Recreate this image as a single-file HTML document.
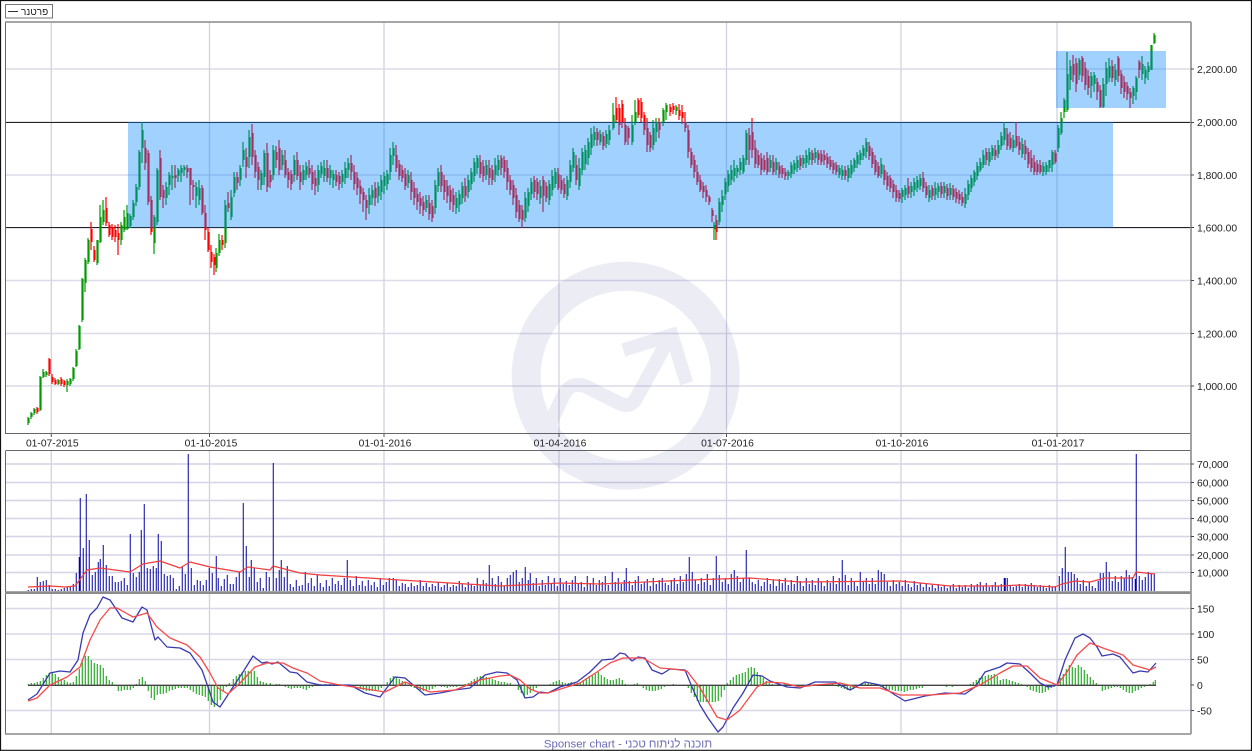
<!DOCTYPE html>
<html lang="he">
<head>
<meta charset="utf-8">
<title>Sponser chart</title>
<style>
html,body{margin:0;padding:0;background:#fff;width:1252px;height:751px;overflow:hidden}
svg{display:block;position:absolute;left:0;top:0}
text{font-family:"Liberation Sans",Arial,sans-serif;font-size:10.3px;fill:#222}
.c path{stroke:#009900;stroke-width:1.2;fill:none}
.c path.r{stroke:#ff0000}
</style>
</head>
<body>
<svg xmlns="http://www.w3.org/2000/svg" width="1252" height="751" viewBox="0 0 1252 751">
<rect x="0" y="0" width="1252" height="751" fill="#fff"/>
<g fill="none" stroke="#dcdce9" stroke-width="1.5">
<path d="M5 69H1191M5 122H1191M5 175H1191M5 228H1191M5 280.5H1191M5 333.5H1191M5 386H1191"/>
<path stroke="#d4d4e6" d="M5 464H1191M5 482.5H1191M5 500.5H1191M5 518.5H1191M5 536.5H1191M5 555H1191M5 572.5H1191"/>
<path stroke="#d8d8e8" d="M5 608.5H1191M5 634H1191M5 659.5H1191M5 710.5H1191"/>
<path stroke="#d2d2e2" stroke-width="1.3" d="M51.3 22V434M209.5 22V434M384 22V434M559 22V434M726.5 22V434M901 22V434M1057 22V434M51.3 451V591M209.5 451V591M384 451V591M559 451V591M726.5 451V591M901 451V591M1057 451V591M51.3 593V734M209.5 593V734M384 593V734M559 593V734M726.5 593V734M901 593V734M1057 593V734"/>
</g>
<path d="M5 122.5H1191M5 227.5H1191" stroke="#222" stroke-width="1.1" fill="none"/>
<g class="c">
<path d="M28 417V425M29 418V423M31 412V419M32 413V417M34 408V415M35 409V413"/>
<path class="r" d="M37 407V414M38 408V412"/>
<path d="M40 376V411M41 377V410M43 369V378M44 372V377M46 371V377M47 372V375"/>
<path class="r" d="M49 358V376M50 359V374M52 374V384M53 377V382M55 378V385M56 380V384"/>
<path d="M58 379V385M59 380V384"/>
<path class="r" d="M61 377V386M62 379V384M64 380V387M65 381V385"/>
<path d="M67 379V392M68 381V385M70 378V386M71 379V384M73 367V381M74 368V379M76 349V367M77 351V366M79 325V350M80 326V349M82 278V322M83 279V320M85 258V292M86 260V283M88 238V264M89 240V262"/>
<path class="r" d="M91 222V250M92 229V242M94 246V262M95 250V260"/>
<path d="M97 240V265M98 240V263M100 205V243M101 217V242M103 200V225M104 210V222"/>
<path class="r" d="M106 197V226M107 208V223M109 222V237M110 225V235M112 224V240M113 227V237M115 225V242M116 230V237M118 224V255M119 233V240"/>
<path d="M121 222V245M122 225V240M124 210V232M125 217V230M127 205V230M128 213V229M130 214V228M131 216V226M133 200V220M134 203V217M136 184V206M137 187V202M139 150V190M140 152V187M142 122V163M143 130V148"/>
<path class="r" d="M145 140V170M146 148V163M148 150V205M149 153V202M151 196V235M152 200V232"/>
<path d="M154 215V254M155 217V243M157 168V225M158 170V222"/>
<path class="r" d="M160 150V200M161 158V197M163 185V208M164 190V198"/>
<path d="M166 182V205M167 187V198M169 172V195M170 175V185M172 165V190M173 176V178"/>
<path class="r" d="M175 165V188M176 175V178"/>
<path d="M178 168V182M179 170V176M181 165V182M182 168V173M184 165V176M185 167V170"/>
<path class="r" d="M187 165V178M188 168V172M190 168V205M191 168V185M193 180V200M194 185V187"/>
<path d="M196 182V208M197 187V196M199 180V205M200 188V200"/>
<path class="r" d="M202 185V215M203 188V213M205 205V240M206 213V230M208 228V252M209 232V250M211 245V268M212 252V262M214 254V275M215 257V265"/>
<path d="M216 248V272M217 253V268M219 234V256M220 240V253"/>
<path class="r" d="M222 235V250M223 240V245"/>
<path d="M225 200V248M226 205V243"/>
<path class="r" d="M228 192V212M229 203V208"/>
<path d="M231 190V220M232 197V217M234 172V197M235 177V193"/>
<path class="r" d="M237 172V190M238 177V183"/>
<path d="M240 165V186M241 168V180M243 142V167M244 150V160"/>
<path class="r" d="M246 148V178M247 157V167"/>
<path d="M249 130V168M250 137V157"/>
<path class="r" d="M252 124V165M253 133V157M255 150V178M256 155V172M258 162V190M259 167V180"/>
<path d="M261 170V190M262 173V185M264 150V185M265 153V177"/>
<path class="r" d="M267 143V192M268 153V187M270 170V188M271 175V182"/>
<path d="M273 145V180M274 150V175"/>
<path class="r" d="M276 146V168M277 152V160M279 140V175M280 148V170"/>
<path d="M282 150V170M283 155V165"/>
<path class="r" d="M285 150V178M286 160V175M288 168V188M289 172V180M291 170V190M292 174V184"/>
<path d="M294 155V182M295 160V175"/>
<path class="r" d="M297 152V180M298 160V176M300 165V190M301 172V182"/>
<path d="M303 165V185M304 170V180M306 162V180M307 166V175"/>
<path class="r" d="M309 160V178M310 168V174M312 165V190M313 172V184M315 170V195M316 178V186"/>
<path d="M318 165V192M319 170V185M321 162V178M322 166V174M324 160V182M325 168V176"/>
<path class="r" d="M327 160V182M328 168V178"/>
<path d="M330 165V185M331 170V178M333 170V188M334 174V180"/>
<path class="r" d="M336 170V186M337 175V182M339 172V190M340 176V184"/>
<path d="M342 170V188M343 174V182M345 162V184M346 168V178M348 158V178M349 163V170"/>
<path class="r" d="M351 155V180M352 163V172M354 165V190M355 172V184M357 172V195M358 178V188M360 180V204M361 186V194M363 188V212M364 192V200M366 195V220M367 200V208"/>
<path d="M369 188V214M370 195V205M372 185V205M373 190V198"/>
<path class="r" d="M375 182V206M376 188V198"/>
<path d="M378 182V203M379 186V196M381 175V200M382 180V192M384 172V194M385 176V186M387 170V190M388 174V184M390 148V180M391 155V172M393 142V165M394 148V156"/>
<path class="r" d="M396 145V172M397 155V168M399 160V180M400 164V176M402 165V182M403 170V178M405 168V190M406 174V186"/>
<path d="M408 170V188M409 175V183"/>
<path class="r" d="M411 172V200M412 180V192M414 182V205M415 188V198M417 188V210M418 194V202M420 192V214M421 198V206M423 196V216M424 202V210"/>
<path d="M426 195V212M427 200V208"/>
<path class="r" d="M429 195V220M430 203V214M432 200V222M433 206V218"/>
<path d="M435 180V214M436 185V208M438 168V192M439 172V186"/>
<path class="r" d="M441 165V192M442 172V186M444 175V200M445 180V192M447 180V203M448 186V196M450 185V210M451 190V202M453 188V212M454 195V205"/>
<path d="M456 192V214M457 198V208M459 190V212M460 194V205M462 182V204M463 186V198"/>
<path class="r" d="M465 178V202M466 186V196"/>
<path d="M468 175V198M469 180V192M471 168V190M472 172V184M474 158V182M475 162V176M477 155V174M478 158V168"/>
<path class="r" d="M480 155V178M481 162V174M483 160V182M484 166V176"/>
<path d="M486 160V180M487 165V175"/>
<path class="r" d="M489 160V185M490 168V178M492 165V185M493 170V180"/>
<path d="M495 158V182M496 165V175M498 155V176M499 160V170"/>
<path class="r" d="M501 155V175M502 158V168M504 156V178M505 160V172M507 160V190M508 168V182M510 175V195M511 180V190M513 180V205M514 185V198M516 188V218M517 195V212M519 200V222M520 205V219"/>
<path class="r" d="M522 205V228M523 210V220"/>
<path d="M525 192V222M526 198V218M528 188V212M529 192V206M531 178V200M532 182V194"/>
<path class="r" d="M534 176V198M535 180V192M537 178V200M538 182V194"/>
<path d="M540 180V204M541 186V198"/>
<path class="r" d="M543 176V212M544 180V196M546 182V202M547 186V198"/>
<path d="M549 180V205M550 184V200M552 170V196M553 176V190M555 168V188M556 172V184"/>
<path class="r" d="M558 168V190M559 174V188M561 175V194M562 180V190M564 178V198M565 184V194"/>
<path d="M567 176V200M568 180V196M570 160V188M571 165V182M573 148V172M574 152V168"/>
<path class="r" d="M576 155V185M577 165V180"/>
<path d="M579 158V190M580 168V186M582 148V175M583 152V170M585 145V170M586 150V164M588 138V165M589 142V158M591 128V155M592 134V148M594 126V146M595 132V140"/>
<path class="r" d="M597 128V146M598 132V140"/>
<path d="M600 130V145M601 134V142"/>
<path class="r" d="M603 132V150M604 136V146"/>
<path d="M606 130V148M607 134V144M609 125V145M610 130V140"/>
<path d="M613 103V130M614 115V128"/>
<path class="r" d="M616 97V122M617 108V120M619 104V135M620 108V125M622 100V128M623 104V122M625 118V145M626 125V142M628 126V145M629 128V138"/>
<path d="M632 115V145M633 125V142M635 100V125M636 112V122"/>
<path class="r" d="M638 98V118M639 100V115M641 98V122M642 102V118M644 112V135M645 115V130M647 118V152M648 128V145M650 132V152M651 135V148"/>
<path d="M653 120V150M654 128V145M656 118V142M657 122V132"/>
<path class="r" d="M659 118V138M660 122V130"/>
<path d="M663 108V126M664 110V122M666 103V120M667 105V112"/>
<path class="r" d="M670 104V116M671 107V112M673 103V114M674 106V110"/>
<path d="M676 105V115M677 107V111"/>
<path class="r" d="M679 104V120M680 110V116M682 105V124M683 112V118M685 112V132M686 122V128M688 125V158M689 130V152M691 148V168M692 152V165M694 155V178M695 160V172M697 165V185M698 172V182M700 175V192M701 180V190M703 182V198M704 186V192M706 185V202M707 190V197M709 195V205M710 197V202M712 208V222M713 210V216"/>
<path d="M714 222V240M715 225V229"/>
<path class="r" d="M716 215V240M717 220V232"/>
<path d="M719 198V225M720 202V222M722 190V212M723 196V205M725 178V200M726 182V194M728 170V192M729 174V186M731 165V185M732 170V180M734 160V182M735 168V176M737 165V178M738 168V172M740 158V175M741 162V170M743 155V174M744 158V172M746 130V165M747 133V160"/>
<path class="r" d="M749 128V165M750 135V150M752 118V158M753 132V150M755 140V168M756 148V164M758 150V168M759 155V165M761 153V175M762 158V170M764 155V172M765 160V170M767 152V175M768 158V172"/>
<path d="M770 155V172M771 160V168"/>
<path class="r" d="M773 155V175M774 162V172"/>
<path d="M776 158V175M777 162V170"/>
<path class="r" d="M779 162V178M780 166V174M782 165V178M783 168V174M785 168V180M786 172V176"/>
<path d="M788 170V180M789 172V176M791 162V178M792 165V174M794 160V174M795 163V170M797 156V172M798 160V168"/>
<path class="r" d="M800 155V170M801 158V166"/>
<path d="M803 155V168M804 158V164M806 150V168M807 155V163M809 148V165M810 152V160"/>
<path class="r" d="M812 150V165M813 153V160"/>
<path d="M815 148V163M816 152V158"/>
<path class="r" d="M818 150V165M819 153V160M821 150V165M822 154V162M824 150V165M825 155V160M827 153V168M828 157V164M830 156V170M831 160V167M833 160V174M834 163V170M836 162V175M837 165V172"/>
<path d="M839 165V178M840 168V175M842 165V180M843 170V176"/>
<path class="r" d="M845 166V180M846 170V176"/>
<path d="M848 165V182M849 168V178M851 160V178M852 165V174M854 158V172M855 160V168M857 152V168M858 155V164M860 150V165M861 153V160M863 145V160M864 148V156M866 138V158M867 142V152"/>
<path class="r" d="M869 142V160M870 146V156M872 148V168M873 152V164M875 155V175M876 160V172M878 162V178M879 166V176"/>
<path d="M881 158V178M882 164V174"/>
<path class="r" d="M884 165V185M885 170V180M887 172V190M888 176V186M890 175V192M891 178V188M893 180V198M894 184V192M896 185V202M897 190V198M899 190V202M900 193V199"/>
<path d="M902 188V203M903 190V197M905 185V200M906 188V195"/>
<path class="r" d="M908 178V198M909 186V194"/>
<path d="M911 182V198M912 186V192M914 178V196M915 182V190M917 176V192M918 180V188M920 174V190M921 178V186"/>
<path class="r" d="M923 172V192M924 178V188M926 182V198M927 186V195"/>
<path d="M929 185V202M930 190V198"/>
<path class="r" d="M932 185V200M933 188V196"/>
<path d="M935 182V200M936 188V195M938 183V198M939 186V192"/>
<path class="r" d="M941 182V198M942 186V194"/>
<path d="M944 182V198M945 186V193"/>
<path class="r" d="M947 184V200M948 188V196"/>
<path d="M950 183V200M951 188V195"/>
<path class="r" d="M953 185V200M954 189V197M956 188V203M957 192V199M959 190V204M960 194V200M962 192V206M963 197V203"/>
<path d="M965 188V208M966 194V204M968 180V200M969 184V195M971 175V192M972 178V188M974 170V186M975 172V182M977 162V180M978 166V176M980 158V172M981 162V170M983 150V168M984 155V165"/>
<path class="r" d="M986 148V165M987 152V160"/>
<path d="M989 148V166M990 152V162M992 145V160M993 148V156"/>
<path class="r" d="M995 145V160M996 150V156"/>
<path d="M998 140V158M999 145V154M1001 132V150M1002 136V146M1004 122V145M1005 128V140"/>
<path class="r" d="M1007 128V150M1008 134V146M1010 132V150M1011 138V148"/>
<path d="M1013 135V152M1014 140V148"/>
<path class="r" d="M1016 122V148M1017 136V146M1019 136V155M1020 142V150"/>
<path d="M1022 138V158M1023 144V154"/>
<path class="r" d="M1025 140V160M1026 146V154M1028 148V168M1029 152V164M1031 150V172M1032 158V168M1034 155V175M1035 162V172M1037 160V175M1038 164V172M1040 160V174M1041 165V172"/>
<path d="M1043 162V176M1044 166V172M1046 162V175M1047 165V172M1049 160V172M1050 160V168M1052 150V172M1053 152V165"/>
<path class="r" d="M1055 150V164M1056 153V162"/>
<path d="M1058 125V152M1059 128V148M1061 112V135M1062 118V133M1064 98V118M1065 100V112M1067 52V112M1068 74V110M1070 60V90M1071 66V80"/>
<path class="r" d="M1073 55V82M1074 64V75M1076 58V92M1077 63V84"/>
<path d="M1079 58V80M1080 60V75"/>
<path class="r" d="M1082 56V82M1083 58V76M1085 62V90M1086 68V85M1088 70V95M1089 76V88"/>
<path d="M1091 72V98M1092 76V86M1094 72V92M1095 75V84"/>
<path class="r" d="M1097 78V100M1098 82V92M1100 85V108M1101 90V107"/>
<path d="M1103 78V108M1104 84V107M1106 62V96M1107 68V84M1109 58V82M1110 66V78"/>
<path class="r" d="M1112 60V82M1113 66V78"/>
<path d="M1115 64V86M1116 70V80"/>
<path class="r" d="M1118 56V82M1119 58V76M1121 70V94M1122 74V88M1124 76V98M1125 82V92M1127 82V100M1128 86V94M1130 88V108M1131 92V98"/>
<path d="M1133 86V104M1134 88V96M1136 76V100M1137 78V92"/>
<path class="r" d="M1139 60V78M1140 62V70"/>
<path d="M1142 56V80M1143 64V74M1145 66V84M1146 70V78M1148 62V80M1149 66V72M1151 45V70M1152 45V70M1154 33V44M1155 35V43"/>
</g>
<rect x="128" y="122" width="985" height="105.5" fill="rgb(0,130,255)" fill-opacity=".37"/>
<rect x="1056" y="51" width="110" height="57" fill="rgb(0,130,255)" fill-opacity=".37"/>
<path transform="translate(.25 0)" fill="none" stroke="#0000a0" stroke-width="1" d="M28 591V590M31 591V589M34 591V589M37 591V577M40 591V582M43 591V581M46 591V580M49 591V585M52 591V589M55 591V589M58 591V590M61 591V589M64 591V588M67 591V587M70 591V586M73 591V584M76 591V573M79 591V557M80 591V498M83 591V548M86 591V494M89 591V540M92 591V575M95 591V572M98 591V562M100 591V559M103 591V545M106 591V565M109 591V576M112 591V576M115 591V582M118 591V582M121 591V581M124 591V578M127 591V585M130 591V534M133 591V573M136 591V577M139 591V572M141 591V530M144 591V504M147 591V568M150 591V569M153 591V566M156 591V568M158 591V534M161 591V541M164 591V574M167 591V576M170 591V575M173 591V578M176 591V589M179 591V586M182 591V567M185 591V574M188 591V454M191 591V568M194 591V585M197 591V580M200 591V581M203 591V585M206 591V580M209 591V568M212 591V573M216 591V556M218 591V578M221 591V586M224 591V579M227 591V575M230 591V584M233 591V584M236 591V577M239 591V572M243 591V503M246 591V546M249 591V577M251 591V560M254 591V568M257 591V582M260 591V578M263 591V588M266 591V572M269 591V577M273 591V463M276 591V578M279 591V570M281 591V560M284 591V577M287 591V566M290 591V584M293 591V587M296 591V580M299 591V586M302 591V585M305 591V572M308 591V583M311 591V578M314 591V586M317 591V575M320 591V583M323 591V587M326 591V580M329 591V586M332 591V578M335 591V584M338 591V581M341 591V585M344 591V578M347 591V560M350 591V580M353 591V586M356 591V576M359 591V585M362 591V581M365 591V586M368 591V580M371 591V585M374 591V582M377 591V587M380 591V578M383 591V585M386 591V582M389 591V578M393 591V578M396 591V580M399 591V586M402 591V583M405 591V584M408 591V587M411 591V583M414 591V586M417 591V585M420 591V580M423 591V586M426 591V583M429 591V587M432 591V584M435 591V586M438 591V582M441 591V587M444 591V585M447 591V583M450 591V587M453 591V585M456 591V586M459 591V581M462 591V584M465 591V587M468 591V582M471 591V584M474 591V586M477 591V578M480 591V585M483 591V580M486 591V583M489 591V565M492 591V578M495 591V584M498 591V576M501 591V582M504 591V586M507 591V578M510 591V575M513 591V572M516 591V570M519 591V582M522 591V578M525 591V567M528 591V580M530 591V573M533 591V583M536 591V578M539 591V586M542 591V580M545 591V585M548 591V576M551 591V583M554 591V578M557 591V586M560 591V578M563 591V584M566 591V581M569 591V585M572 591V580M575 591V576M578 591V584M581 591V582M584 591V587M587 591V576M590 591V583M593 591V578M596 591V585M599 591V580M602 591V582M605 591V576M608 591V585M612 591V572M615 591V582M618 591V578M621 591V584M624 591V580M626 591V568M629 591V581M632 591V585M635 591V580M638 591V576M641 591V584M644 591V582M647 591V579M650 591V586M653 591V578M656 591V584M659 591V580M662 591V578M665 591V583M668 591V585M671 591V580M674 591V578M677 591V584M680 591V576M683 591V582M686 591V574M689 591V557M692 591V572M695 591V580M698 591V584M701 591V578M704 591V582M707 591V574M710 591V585M713 591V578M716 591V556M719 591V575M722 591V582M725 591V578M728 591V584M731 591V574M734 591V570M737 591V576M740 591V582M743 591V578M746 591V550M749 591V578M752 591V582M755 591V584M758 591V580M761 591V586M764 591V582M767 591V578M770 591V584M773 591V580M776 591V586M779 591V579M782 591V583M785 591V578M788 591V585M791 591V580M794 591V584M797 591V576M800 591V581M803 591V586M806 591V578M809 591V584M812 591V580M815 591V585M818 591V578M821 591V582M824 591V586M827 591V580M830 591V583M833 591V576M836 591V584M839 591V578M842 591V560M845 591V575M848 591V585M851 591V578M854 591V582M857 591V586M860 591V572M863 591V582M866 591V578M869 591V584M872 591V578M875 591V584M878 591V570M881 591V572M884 591V574M887 591V582M890 591V586M893 591V580M896 591V584M899 591V582M902 591V586M905 591V580M908 591V584M911 591V587M914 591V581M917 591V585M920 591V583M923 591V587M926 591V584M929 591V587M932 591V585M935 591V588M938 591V584M941 591V587M944 591V585M947 591V588M950 591V586M953 591V584M956 591V588M959 591V585M962 591V587M965 591V585M968 591V588M971 591V584M974 591V586M977 591V584M980 591V582M983 591V586M986 591V583M989 591V587M992 591V585M995 591V582M998 591V586M1001 591V584M1004 591V578M1005 591V578M1007 591V578M1010 591V585M1013 591V587M1016 591V586M1019 591V584M1022 591V587M1025 591V584M1028 591V586M1031 591V583M1034 591V585M1037 591V587M1040 591V585M1043 591V586M1046 591V588M1049 591V585M1052 591V587M1055 591V586M1059 591V576M1062 591V568M1065 591V547M1068 591V572M1071 591V572M1074 591V574M1077 591V578M1080 591V584M1083 591V580M1086 591V586M1089 591V582M1092 591V586M1095 591V588M1098 591V581M1100 591V573M1103 591V573M1106 591V562M1109 591V572M1112 591V581M1115 591V576M1118 591V582M1121 591V576M1124 591V578M1126 591V570M1129 591V575M1132 591V577M1135 591V579M1136 591V454M1139 591V576M1142 591V580M1145 591V577M1148 591V572M1151 591V573M1154 591V574"/>
<polyline fill="none" stroke="#f43c3c" stroke-width="1.2" stroke-linejoin="round" points="28,587 50,586 65,587 75,586 87,570 100,568 130,572 143,564 160,561 180,568 190,562 210,567 240,572 248,567 270,570 273,566 300,573 320,575 400,580 500,586 560,583 600,584 690,580 750,578 800,582 900,581 950,586 1000,586 1020,585 1055,587 1062,584 1075,581 1090,582 1105,578 1133,578 1136,572 1155,574"/>
<path transform="translate(.25 0)" fill="none" stroke="#009900" stroke-width="1" d="M28 685V684M31 685V683M34 685V683M37 685V682M40 685V681M43 685V678M46 685V675M49 685V673M52 685V673M55 685V674M58 685V677M61 685V679M64 685V680M67 685V682M70 685V683M73 685V682M76 685V676M79 685V669M82 685V660M85 685V656M88 685V656M91 685V660M94 685V663M97 685V664M100 685V665M103 685V668M106 685V676M109 685V680M112 685V682M118 685V691M121 685V691M124 685V690M127 685V690M130 685V690M133 685V688M136 685V684M139 685V679M142 685V677M145 685V681M148 685V691M151 685V698M154 685V700M157 685V695M160 685V694M163 685V694M166 685V693M169 685V691M172 685V690M175 685V689M178 685V688M181 685V688M184 685V688M187 685V688M190 685V690M193 685V692M196 685V694M199 685V695M202 685V696M205 685V697M208 685V701M211 685V705M214 685V707M217 685V705M220 685V700M223 685V691M226 685V687M229 685V683M233 685V679M236 685V676M239 685V674M242 685V672M245 685V671M248 685V671M251 685V672M254 685V671M257 685V677M260 685V681M263 685V682M266 685V683M270 685V683M276 685V684M279 685V684M285 685V687M288 685V688M291 685V689M294 685V688M297 685V688M300 685V688M303 685V689M306 685V690M309 685V688M312 685V687M315 685V686M320 685V684M325 685V684M330 685V684M335 685V684M340 685V684M345 685V685M350 685V686M355 685V687M360 685V689M363 685V690M366 685V691M369 685V691M372 685V691M375 685V691M378 685V690M381 685V688M384 685V686M387 685V682M390 685V678M393 685V676M396 685V677M399 685V679M402 685V681M405 685V683M408 685V686M411 685V687M414 685V688M417 685V689M420 685V690M423 685V691M426 685V691M429 685V690M432 685V689M435 685V687M438 685V686M441 685V687M444 685V687M447 685V688M450 685V687M453 685V687M456 685V687M459 685V686M462 685V685M465 685V684M468 685V683M471 685V681M474 685V679M477 685V677M480 685V676M483 685V676M486 685V677M489 685V678M492 685V679M495 685V680M498 685V681M501 685V682M504 685V682M507 685V683M510 685V683M518 685V690M521 685V693M524 685V697M527 685V695M530 685V693M533 685V690M536 685V688M550 685V684M553 685V682M556 685V681M559 685V680M562 685V682M565 685V683M568 685V683M571 685V682M574 685V683M577 685V683M580 685V682M583 685V680M586 685V678M589 685V676M592 685V675M595 685V674M598 685V672M601 685V675M604 685V677M607 685V679M610 685V680M613 685V680M616 685V679M619 685V678M622 685V680M625 685V684M628 685V686M631 685V686M634 685V684M637 685V683M643 685V688M646 685V690M649 685V691M652 685V691M655 685V691M658 685V690M661 685V689M664 685V687M673 685V684M685 685V686M688 685V688M691 685V693M694 685V697M697 685V701M700 685V702M703 685V702M706 685V702M709 685V702M712 685V702M715 685V702M718 685V701M721 685V697M724 685V690M727 685V683M730 685V680M733 685V677M736 685V675M739 685V674M742 685V673M745 685V672M748 685V668M751 685V667M754 685V668M757 685V672M760 685V675M763 685V678M766 685V681M769 685V683M772 685V684M778 685V684M784 685V684M790 685V684M796 685V686M802 685V686M808 685V684M814 685V684M820 685V684M826 685V684M832 685V684M838 685V687M841 685V688M844 685V689M847 685V690M850 685V690M853 685V689M856 685V688M862 685V684M865 685V683M868 685V683M871 685V684M877 685V686M880 685V687M883 685V688M886 685V689M889 685V690M892 685V690M895 685V691M898 685V691M901 685V691M904 685V692M907 685V691M910 685V690M913 685V690M916 685V689M919 685V688M922 685V688M928 685V686M934 685V686M940 685V686M946 685V687M952 685V687M958 685V686M964 685V686M970 685V684M973 685V682M976 685V680M979 685V678M982 685V677M985 685V676M988 685V675M991 685V675M994 685V674M997 685V676M1000 685V680M1003 685V679M1006 685V679M1009 685V680M1012 685V681M1015 685V682M1018 685V683M1021 685V684M1027 685V687M1030 685V690M1033 685V691M1036 685V692M1039 685V693M1042 685V693M1045 685V692M1048 685V690M1051 685V688M1054 685V687M1060 685V678M1063 685V674M1066 685V669M1069 685V665M1072 685V667M1075 685V668M1078 685V665M1081 685V667M1084 685V670M1087 685V674M1090 685V677M1093 685V680M1096 685V683M1102 685V691M1105 685V690M1108 685V689M1111 685V688M1114 685V687M1117 685V687M1120 685V688M1123 685V690M1126 685V692M1129 685V693M1132 685V693M1135 685V691M1138 685V690M1141 685V688M1144 685V687M1147 685V686M1150 685V684M1153 685V682M1155 685V680"/>
<path d="M28 685.3H1156" stroke="#444" stroke-width="1.4"/>
<polyline fill="none" stroke="#3a3ab0" stroke-width="1.3" stroke-linejoin="round" points="28,700 37,694 50,673 60,671 70,672 78,660 83,633 90,615 97,608 103,597 110,600 122,618 133,622 142,607 147,610 155,640 158,637 167,647 180,648 190,653 202,670 208,687 213,702 220,707 233,687 243,672 253,656 262,663 267,662 272,664 278,662 290,672 297,673 307,682 320,685 330,685 350,685 365,693 380,697 395,677 405,678 425,695 440,693 455,690 470,688 485,675 497,672 507,673 517,680 525,698 533,697 540,692 548,693 560,687 577,682 590,672 602,660 613,659 620,653 625,654 632,661 638,657 645,658 652,670 662,674 670,669 685,670 692,687 700,705 708,718 718,732 723,727 733,708 743,693 753,675 762,676 770,681 787,687 800,688 815,682 835,682 850,690 865,682 880,685 895,695 905,701 925,696 945,693 965,694 975,687 985,672 1000,667 1007,663 1020,664 1030,673 1040,683 1048,687 1057,685 1065,660 1075,638 1083,634 1090,638 1097,647 1102,656 1113,654 1120,657 1133,673 1140,671 1148,672 1156,663"/>
<polyline fill="none" stroke="#f74a4a" stroke-width="1.3" stroke-linejoin="round" points="28,701 37,698 50,685 67,677 80,667 90,640 100,620 110,608 117,608 133,617 147,613 157,627 170,638 187,645 200,657 210,673 218,688 228,694 240,683 255,667 267,663 283,663 293,668 307,673 320,681 340,685 360,688 385,692 405,682 430,692 455,690 480,680 500,676 510,675 520,680 530,689 540,693 548,693 567,687 580,683 597,672 610,663 623,658 643,658 660,668 673,669 687,671 700,688 717,717 727,720 740,710 757,687 767,682 783,683 800,687 815,685 840,683 860,688 880,688 900,695 930,695 960,693 980,685 1000,673 1013,666 1027,666 1040,678 1057,685 1067,672 1077,655 1090,643 1103,648 1123,655 1133,665 1150,670 1156,667"/>
<g fill="none" stroke="#666" stroke-width="1">
<path d="M5.5 22V433.5H1191M5.5 450.5H1191M5.5 451V592M5.5 593V734"/>
<path stroke="#8c8c8c" stroke-width="1.5" d="M5 592H1191M5 593.2H1191"/>
<path stroke="#999" stroke-width="1.8" d="M5 22H1191M5 734H1191M1191 22V734"/>
<path stroke="#444" d="M1191 69h3M1191 122.5h3M1191 175h3M1191 227.5h3M1191 280.5h3M1191 333.5h3M1191 386h3M1191 464h3M1191 482.5h3M1191 500.5h3M1191 518.5h3M1191 536.5h3M1191 555h3M1191 572.5h3M1191 608.5h3M1191 634h3M1191 659.5h3M1191 685h3M1191 710.5h3"/>
<path stroke="#555" d="M51.3 434v3M209.5 434v3M384 434v3M559 434v3M726.5 434v3M901 434v3M1057 434v3"/>
</g>
<g>
<text x="1197" y="72.8">2,200.00</text>
<text x="1197" y="126">2,000.00</text>
<text x="1197" y="178.8">1,800.00</text>
<text x="1197" y="231.3">1,600.00</text>
<text x="1197" y="284.3">1,400.00</text>
<text x="1197" y="337.3">1,200.00</text>
<text x="1197" y="389.8">1,000.00</text>
<text x="1197" y="467.8">70,000</text>
<text x="1197" y="486.3">60,000</text>
<text x="1197" y="504.3">50,000</text>
<text x="1197" y="522.3">40,000</text>
<text x="1197" y="540.3">30,000</text>
<text x="1197" y="558.8">20,000</text>
<text x="1197" y="576.3">10,000</text>
<text x="1197" y="612.3">150</text>
<text x="1197" y="637.8">100</text>
<text x="1197" y="663.3">50</text>
<text x="1197" y="688.8">0</text>
<text x="1197" y="714.3">-50</text>
<g text-anchor="middle">
<text x="52.3" y="446.3">01-07-2015</text>
<text x="211" y="446.3">01-10-2015</text>
<text x="385" y="446.3">01-01-2016</text>
<text x="560" y="446.3">01-04-2016</text>
<text x="727.5" y="446.3">01-07-2016</text>
<text x="902" y="446.3">01-10-2016</text>
<text x="1058" y="446.3">01-01-2017</text>
</g>
</g>
<rect x="5.5" y="4.5" width="47" height="13.5" fill="#fff" stroke="#777"/>
<path d="M8 11.5H18" stroke="#333" stroke-width="1"/>
<text x="21" y="15" style="font-size:10px" fill="#333">פרטנר</text>
<text x="628" y="747.3" text-anchor="middle" direction="ltr" style="font-size:11.4px;fill:#6a6ab6">Sponser chart - תוכנה לניתוח טכני</text>
<path d="M0.5 0V751M0 0.5H1252M0 750.3H1252M1251.5 0V751" stroke="#111" stroke-width="1.2" fill="none"/>
<g opacity=".09">
<circle cx="625.7" cy="375.7" r="99.5" fill="none" stroke="#3c3c96" stroke-width="29"/>
<path d="M548 428L563 396Q571 380 587 387L619 403Q631 409 637 397L668 340" fill="none" stroke="#3c3c96" stroke-width="14"/>
<path d="M623.3 350L671.7 335L686.7 383.3" fill="none" stroke="#3c3c96" stroke-width="13.5"/>
</g>
</svg>
</body>
</html>
